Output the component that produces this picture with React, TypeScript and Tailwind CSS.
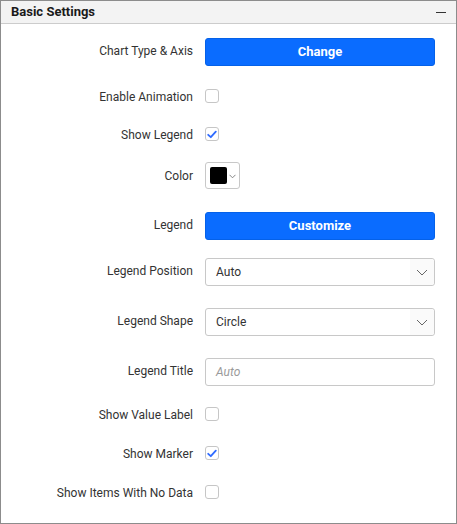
import React from "react";

const font = { fontFamily: "Roboto, 'Liberation Sans', sans-serif" };

function Check({ checked }: { checked?: boolean }) {
  return (
    <div className="w-[14px] h-[14px] rounded-[3px] border border-[#c6c6c6] bg-white flex items-center justify-center">
      {checked && (
        <svg width="10" height="9" viewBox="0 0 10 9">
          <path d="M1.2 4.8 L3.8 7.2 L8.8 1.6" fill="none" stroke="#2f6bff" strokeWidth="1.8" strokeLinecap="round" strokeLinejoin="round" />
        </svg>
      )}
    </div>
  );
}

function Row({ label, mt, h = 28, up, children }: { label: string; mt: string; h?: number; up?: boolean; children: React.ReactNode }) {
  return (
    <div className={`flex items-center ${mt}`} style={{ height: h }}>
      <div className={`w-[192px] text-right text-[12px] text-[#333] leading-none ${up ? "pb-[3px]" : "pt-[1px]"}`}>{label}</div>
      <div className="ml-[12px] w-[230px] flex items-center">{children}</div>
    </div>
  );
}

function Btn({ text }: { text: string }) {
  return (
    <div className="w-[230px] h-[28px] rounded-[3px] bg-[#0a6cff] border border-[#0561e8] flex items-center justify-center text-white font-bold text-[13px]">
      {text}
    </div>
  );
}

function Select({ text }: { text: string }) {
  return (
    <div className="w-[230px] h-[28px] rounded-[3px] border border-[#c8c8c8] bg-white flex items-center">
      <span className="flex-1 pl-[10px] text-[12px] text-[#333]">{text}</span>
      <div className="w-[24px] h-[26px] bg-[#fafafa] flex items-center justify-center rounded-r-[3px]">
        <svg width="12" height="7" viewBox="0 0 12 7">
          <path d="M1 1 L6 6 L11 1" fill="none" stroke="#666" strokeWidth="1" />
        </svg>
      </div>
    </div>
  );
}

export default function App() {
  return (
    <div style={font} className="w-[457px] h-[524px] border border-[#8c8c8c] bg-white flex flex-col overflow-hidden">
      <div className="h-[23px] bg-[#f3f3f3] border-b border-[#cccccc] flex items-center justify-between px-[10px]">
        <span className="text-[13px] font-bold text-[#1a1a1a]">Basic Settings</span>
        <div className="w-[10px] h-[1.5px] bg-[#333] mt-[1px]" />
      </div>
      <Row label="Chart Type & Axis" mt="mt-[14px]" up>
        <Btn text="Change" />
      </Row>
      <Row label="Enable Animation" mt="mt-[16px]">
        <Check />
      </Row>
      <Row label="Show Legend" mt="mt-[10px]">
        <Check checked />
      </Row>
      <Row label="Color" mt="mt-[14px]" h={27}>
        <div className="w-[35px] h-[27px] rounded-[3px] border border-[#c8c8c8] bg-white flex items-center pl-[4px]">
          <div className="w-[17px] h-[17px] rounded-[2px] bg-black" />
          <svg width="7" height="5" viewBox="0 0 7 5" className="ml-[2px] mt-[1px]">
            <path d="M0.5 0.8 L3.5 3.8 L6.5 0.8" fill="none" stroke="#777" strokeWidth="0.9" />
          </svg>
        </div>
      </Row>
      <Row label="Legend" mt="mt-[23px]" up>
        <Btn text="Customize" />
      </Row>
      <Row label="Legend Position" mt="mt-[18px]" up>
        <Select text="Auto" />
      </Row>
      <Row label="Legend Shape" mt="mt-[22px]" up>
        <Select text="Circle" />
      </Row>
      <Row label="Legend Title" mt="mt-[22px]" up>
        <div className="w-[230px] h-[28px] rounded-[3px] border border-[#c8c8c8] bg-white flex items-center pl-[10px] text-[12px] italic text-[#9a9a9a]">
          Auto
        </div>
      </Row>
      <Row label="Show Value Label" mt="mt-[14px]">
        <Check />
      </Row>
      <Row label="Show Marker" mt="mt-[11px]">
        <Check checked />
      </Row>
      <Row label="Show Items With No Data" mt="mt-[11px]">
        <Check />
      </Row>
    </div>
  );
}
